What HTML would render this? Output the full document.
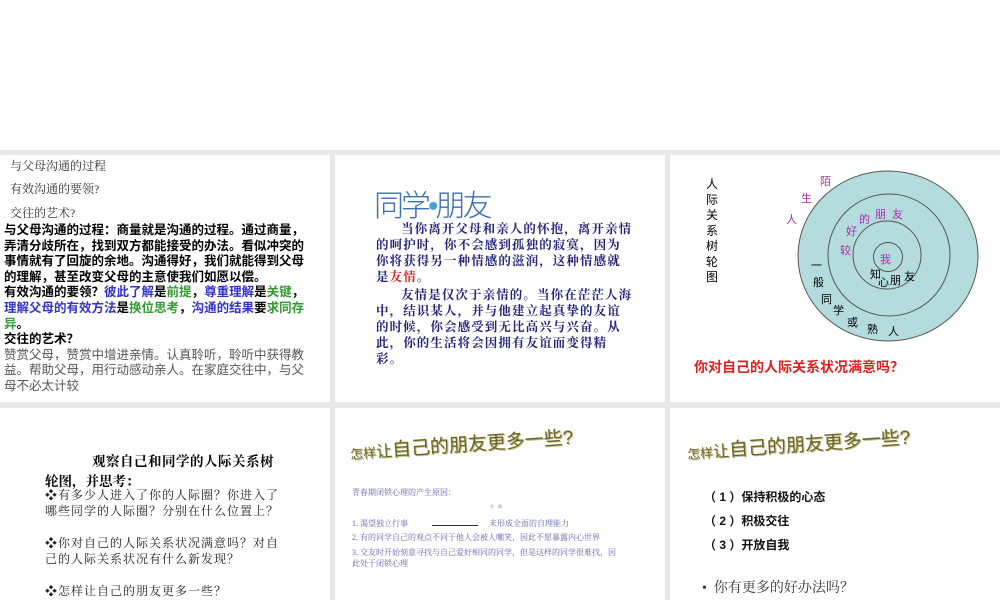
<!DOCTYPE html>
<html><head><meta charset="utf-8"><style>
body{margin:0;width:1000px;height:600px;background:#fff;position:relative;overflow:hidden;font-family:"Liberation Sans","Noto Sans CJK SC",sans-serif}
.bg{position:absolute;left:0;top:150px;width:1000px;height:450px;background:#e8e8e8}
.p{position:absolute;background:#fff;overflow:hidden}
.a{position:absolute;white-space:nowrap}
.serif{font-family:"Liberation Serif","Noto Serif CJK SC",serif}
.ttl{font-family:"Liberation Sans","Noto Sans CJK SC",sans-serif;color:#6b6428;text-shadow:1px 1px 0 #c9c08a;font-size:19px}
</style></head><body>
<div class="bg"></div>

<div class="p" style="left:0;top:155px;width:330px;height:247px">
 <div class="a serif" style="left:10px;top:2px;font-size:12px;color:#333">与父母沟通的过程</div>
 <div class="a serif" style="left:10px;top:25px;font-size:12px;color:#333">有效沟通的要领?</div>
 <div class="a serif" style="left:10px;top:49px;font-size:12px;color:#333">交往的艺术?</div>
 <div class="a" style="left:4px;top:68px;width:312px;white-space:normal;font-size:12.5px;line-height:15.6px;color:#000;font-weight:bold">
 与父母沟通的过程：商量就是沟通的过程。通过商量，弄清分歧所在，找到双方都能接受的办法。看似冲突的事情就有了回旋的余地。沟通得好，我们就能得到父母的理解，甚至改变父母的主意使我们如愿以偿。<br>有效沟通的要领？<span style="color:#3333cc">彼此了解</span>是<span style="color:#339933">前提</span>，<span style="color:#3333cc">尊重理解</span>是<span style="color:#339933">关键</span>，<span style="color:#3333cc">理解父母的有效方法</span>是<span style="color:#339933">换位思考</span>，<span style="color:#3333cc">沟通的结果</span>要<span style="color:#339933">求同存异</span>。<br>交往的艺术？<br><span style="color:#555;font-weight:normal">赞赏父母，赞赏中增进亲情。认真聆听，聆听中获得教益。帮助父母，用行动感动亲人。在家庭交往中，与父母不必太计较</span></div>
</div>

<div class="p" style="left:335px;top:155px;width:330px;height:247px">
 <div class="a" style="left:39px;top:26px;font-size:30px;color:#3b6fb3;letter-spacing:-3px;font-weight:300">同学<span style="color:#4aa0d0">•</span>朋友</div>
 <div class="a serif" style="left:41px;top:66px;width:258px;white-space:normal;font-size:12.5px;line-height:16px;color:#22227a;font-weight:bold;letter-spacing:1.1px;text-indent:2em">当你离开父母和亲人的怀抱，离开亲情的呵护时，你不会感到孤独的寂寞，因为你将获得另一种情感的滋润，这种情感就是<span style="color:#e02020">友情</span>。</div>
 <div class="a serif" style="left:41px;top:132px;width:258px;white-space:normal;font-size:12.5px;line-height:16px;color:#22227a;font-weight:bold;letter-spacing:1.1px;text-indent:2em">友情是仅次于亲情的。当你在茫茫人海中，结识某人，并与他建立起真挚的友谊的时候，你会感受到无比高兴与兴奋。从此，你的生活将会因拥有友谊而变得精彩。</div>
</div>

<div class="p" style="left:670px;top:155px;width:330px;height:247px">
 <div class="a" style="left:36px;top:22px;font-size:12px;line-height:15.5px;white-space:normal;width:14px;color:#000">人际关系树轮图</div>
 <svg class="a" style="left:0;top:0" width="330" height="247">
  <ellipse cx="218" cy="101" rx="90" ry="85" fill="#b4dcdc" stroke="#555" stroke-width="1"/>
  <circle cx="219" cy="100" r="61" fill="none" stroke="#555"/>
  <circle cx="217" cy="100" r="34" fill="none" stroke="#555"/>
  <circle cx="218" cy="102" r="14.5" fill="none" stroke="#555"/>
 </svg>
 <div class="a" style="font-size:11px;color:#b02ab0;left:150px;top:18px">陌</div>
 <div class="a" style="font-size:11px;color:#b02ab0;left:131px;top:35px">生</div>
 <div class="a" style="font-size:11px;color:#b02ab0;left:116px;top:56px">人</div>
 <div class="a" style="font-size:11px;color:#b02ab0;left:176px;top:68px">好</div>
 <div class="a" style="font-size:11px;color:#b02ab0;left:189px;top:56px">的</div>
 <div class="a" style="font-size:11px;color:#b02ab0;left:205px;top:51px">朋</div>
 <div class="a" style="font-size:11px;color:#b02ab0;left:222px;top:51px">友</div>
 <div class="a" style="font-size:11px;color:#b02ab0;left:170px;top:87px">较</div>
 <div class="a" style="font-size:11px;color:#b02ab0;left:210px;top:96px">我</div>
 <div class="a" style="font-size:11px;color:#000;left:200px;top:111px">知</div>
 <div class="a" style="font-size:11px;color:#000;left:208px;top:119px">心</div>
 <div class="a" style="font-size:11px;color:#000;left:220px;top:117px">朋</div>
 <div class="a" style="font-size:11px;color:#000;left:234px;top:113px">友</div>
 <div class="a" style="font-size:11px;color:#000;left:141px;top:102px">一</div>
 <div class="a" style="font-size:11px;color:#000;left:143px;top:119px">般</div>
 <div class="a" style="font-size:11px;color:#000;left:151px;top:136px">同</div>
 <div class="a" style="font-size:11px;color:#000;left:163px;top:147px">学</div>
 <div class="a" style="font-size:11px;color:#000;left:177px;top:159px">或</div>
 <div class="a" style="font-size:11px;color:#000;left:197px;top:166px">熟</div>
 <div class="a" style="font-size:11px;color:#000;left:218px;top:168px">人</div>
 <div class="a" style="left:24px;top:202px;font-size:14px;font-weight:bold;color:#e02020">你对自己的人际关系状况满意吗？</div>
</div>

<div class="p" style="left:0;top:408px;width:330px;height:192px">
 <div class="a serif" style="left:92px;top:42px;font-size:13.5px;font-weight:bold;color:#000;letter-spacing:0.5px">观察自己和同学的人际关系树</div>
 <div class="a serif" style="left:45px;top:62px;font-size:13.5px;font-weight:bold;color:#000">轮图，并思考：</div>
 <div class="a serif" style="left:45px;top:79px;font-size:12px;line-height:16px;color:#222;letter-spacing:1px">❖有多少人进入了你的人际圈？你进入了<br>哪些同学的人际圈？分别在什么位置上？<br><br>❖你对自己的人际关系状况满意吗？对自<br>己的人际关系状况有什么新发现？<br><br>❖怎样让自己的朋友更多一些？</div>
</div>

<div class="p" style="left:335px;top:408px;width:330px;height:192px">
 <div class="a ttl" style="left:16px;top:30px;transform:rotate(-4deg);transform-origin:left bottom"><span style="font-size:13px">怎样</span><span style="font-size:16px">让</span>自己的朋友更多一些?</div>
 <div class="a serif" style="left:17px;top:79px;font-size:8px;color:#6060a8">青春期闭锁心理的产生原因：</div>
 <div class="a serif" style="left:155px;top:96px;font-size:4px;color:#6060a8">矛　盾</div>
 <div class="a serif" style="left:17px;top:110px;font-size:8px;color:#6060a8">1. 渴望独立行事</div>
 <div class="a" style="left:97px;top:117px;width:46px;height:1px;background:#333"></div>
 <div class="a serif" style="left:154px;top:110px;font-size:8px;color:#6060a8">未形成全面的自理能力</div>
 <div class="a serif" style="left:17px;top:124px;font-size:8px;color:#6060a8">2. 有的同学自己的观点不同于他人会被人嘲笑，因此不愿暴露内心世界</div>
 <div class="a serif" style="left:17px;top:139px;font-size:8px;line-height:11px;color:#6060a8">3. 交友时开始刻意寻找与自己爱好相同的同学，但是这样的同学很难找，因<br>此处于闭锁心理</div>
</div>

<div class="p" style="left:670px;top:408px;width:330px;height:192px">
 <div class="a ttl" style="left:18px;top:30px;transform:rotate(-4deg);transform-origin:left bottom"><span style="font-size:13px">怎样</span><span style="font-size:16px">让</span>自己的朋友更多一些?</div>
 <div class="a" style="left:34px;top:80px;font-size:12px;font-weight:bold;color:#111">（ 1 ）保持积极的心态</div>
 <div class="a" style="left:34px;top:104px;font-size:12px;font-weight:bold;color:#111">（ 2 ）积极交往</div>
 <div class="a" style="left:34px;top:128px;font-size:12px;font-weight:bold;color:#111">（ 3 ）开放自我</div>
 <div class="a serif" style="left:32px;top:169px;font-size:14px;color:#333">•&nbsp; 你有更多的好办法吗？</div>
</div>
</body></html>
